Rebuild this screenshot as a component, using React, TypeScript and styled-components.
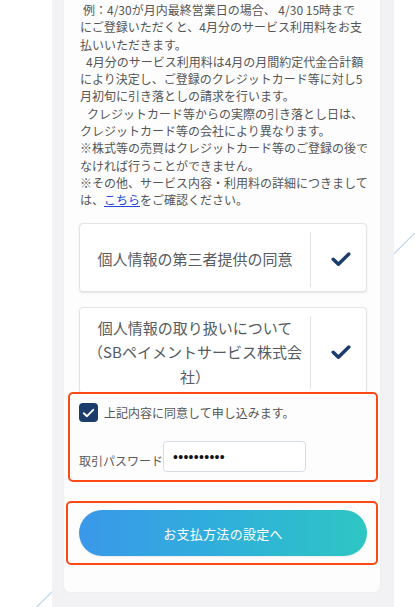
import React from "react";
import styled, { createGlobalStyle } from "styled-components";

const GlobalStyle = createGlobalStyle`
  html, body {
    margin: 0;
    padding: 0;
    background: #ffffff;
  }
  body {
    font-family: "Noto Sans CJK JP", "Noto Sans", sans-serif;
  }
  #root {
    width: 415px;
    height: 607px;
  }
`;

const Page = styled.div`
  position: relative;
  width: 415px;
  height: 607px;
  overflow: hidden;
  background: #ffffff;
`;

const Backdrop = styled.svg`
  position: absolute;
  left: 0;
  top: 0;
  width: 415px;
  height: 607px;
  pointer-events: none;
`;

const Panel = styled.div`
  position: relative;
  margin-left: 52px;
  width: 342px;
  min-height: 607px;
  box-sizing: border-box;
  background: #f2f2f4;
  padding: 0 14px 14px 12px;
`;

const Card = styled.main`
  display: flex;
  flex-direction: column;
  background: #fdfdfe;
  border-radius: 0 0 6px 6px;
  box-shadow: 0 0 3px rgba(0, 0, 0, 0.04);
  padding: 1px 13px 27px 15px;
`;

const Notice = styled.div`
  font-size: 12px;
  line-height: 17.3px;
  color: #555555;
  padding-left: 1px;
`;

const Line = styled.div<{ $indent?: number }>`
  white-space: nowrap;
  padding-left: ${(p) => p.$indent ?? 0}px;
`;

const Link = styled.a`
  color: #2449d6;
  text-decoration: underline;
`;

const ConsentList = styled.div`
  display: flex;
  flex-direction: column;
  gap: 15px;
  margin-top: 14px;
`;

const ConsentBox = styled.div`
  display: flex;
  min-height: 69px;
  box-sizing: border-box;
  border: 1px solid #e4e4e6;
  border-radius: 4px;
  background: #ffffff;
  box-shadow: 0 1px 2px rgba(0, 0, 0, 0.1);
  padding: 8px 0 4px;
`;

const ConsentText = styled.div`
  flex: 1;
  display: flex;
  align-items: center;
  justify-content: center;
  text-align: center;
  font-size: 15px;
  line-height: 24.5px;
  color: #555b63;
  padding: 0 8px;
`;

const CheckCell = styled.div`
  width: 51px;
  padding-left: 4px;
  border-left: 1px solid #e4e4e6;
  display: flex;
  align-items: center;
  justify-content: center;
`;

const Highlight = styled.section`
  position: relative;
  z-index: 1;
  border: 2px solid #fb4a16;
  border-radius: 5px;
  background: #fdfdfe;
`;

const AgreementArea = styled(Highlight)`
  margin: -2px -11px 0 -11px;
  padding: 9px 9px 8px 9px;
`;

const SubmitArea = styled(Highlight)`
  margin: 19px -11px 0 -13px;
  padding: 7px 9px 7px 11px;
`;

const AgreeRow = styled.label`
  display: flex;
  align-items: center;
  gap: 6px;
  font-size: 12px;
  line-height: 17px;
  color: #555555;
`;

const CheckBox = styled.span`
  width: 19px;
  height: 19px;
  border-radius: 4px;
  background: #1b3d6e;
  display: flex;
  align-items: center;
  justify-content: center;
  flex-shrink: 0;
`;

const PasswordRow = styled.div`
  display: flex;
  align-items: center;
  margin-top: 19px;
`;

const PasswordLabel = styled.span`
  font-size: 12px;
  line-height: 17px;
  color: #5a5a5a;
  margin-top: 7px;
  width: 84px;
  white-space: nowrap;
`;

const PasswordInput = styled.input`
  width: 143px;
  height: 31px;
  box-sizing: border-box;
  border: 1px solid #d6dde6;
  border-radius: 4px;
  background: #ffffff;
  padding: 0 9px;
  font-family: "Liberation Sans", sans-serif;
  font-size: 14px;
  letter-spacing: 0.3px;
  color: #111111;
  outline: none;
`;

const SubmitButton = styled.button`
  display: block;
  width: 100%;
  height: 46px;
  border: none;
  border-radius: 23px;
  background: linear-gradient(90deg, #3a98ea 0%, #2fb0da 50%, #2ec6c4 100%);
  box-shadow: 0 1px 2px rgba(0, 0, 0, 0.08);
  color: #ffffff;
  font-family: "Noto Sans CJK JP", "Noto Sans", sans-serif;
  font-size: 13px;
  font-weight: 400;
  letter-spacing: 0.3px;
  cursor: pointer;
`;

const BigCheck = () => (
  <svg width="20" height="15" viewBox="0 0 20 15" aria-hidden="true">
    <path
      d="M2.2 7.2 L7.4 12.3 L17.8 2"
      fill="none"
      stroke="#1b3d6e"
      strokeWidth="3.4"
      strokeLinecap="round"
      strokeLinejoin="round"
    />
  </svg>
);

const SmallCheck = () => (
  <svg width="13" height="10" viewBox="0 0 13 10" aria-hidden="true">
    <path
      d="M1.8 5.2 L5 8.2 L11.2 1.8"
      fill="none"
      stroke="#ffffff"
      strokeWidth="1.9"
      strokeLinecap="round"
      strokeLinejoin="round"
    />
  </svg>
);

export default function App() {
  return (
    <Page>
      <GlobalStyle />
      <Backdrop viewBox="0 0 415 607" aria-hidden="true">
        <line x1="36.8" y1="607" x2="415" y2="233" stroke="#bcd5f1" strokeWidth="1.2" />
      </Backdrop>
      <Panel>
        <Card>
          <Notice>
            <Line $indent={3}>例：4/30が月内最終営業日の場合、 4/30 15時まで</Line>
            <Line>にご登録いただくと、4月分のサービス利用料をお支</Line>
            <Line>払いいただきます。</Line>
            <Line $indent={6}>4月分のサービス利用料は4月の月間約定代金合計額</Line>
            <Line>により決定し、ご登録のクレジットカード等に対し5</Line>
            <Line>月初旬に引き落としの請求を行います。</Line>
            <Line $indent={7}>クレジットカード等からの実際の引き落とし日は、</Line>
            <Line>クレジットカード等の会社により異なります。</Line>
            <Line>※株式等の売買はクレジットカード等のご登録の後で</Line>
            <Line>なければ行うことができません。</Line>
            <Line>※その他、サービス内容・利用料の詳細につきまして</Line>
            <Line>
              は、<Link href="#">こちら</Link>をご確認ください。
            </Line>
          </Notice>

          <ConsentList>
            <ConsentBox>
              <ConsentText>個人情報の第三者提供の同意</ConsentText>
              <CheckCell>
                <BigCheck />
              </CheckCell>
            </ConsentBox>
            <ConsentBox>
              <ConsentText>
                個人情報の取り扱いについて
                <br />
                （SBペイメントサービス株式会
                <br />
                社）
              </ConsentText>
              <CheckCell>
                <BigCheck />
              </CheckCell>
            </ConsentBox>
          </ConsentList>

          <AgreementArea>
            <AgreeRow>
              <CheckBox>
                <SmallCheck />
              </CheckBox>
              上記内容に同意して申し込みます。
            </AgreeRow>
            <PasswordRow>
              <PasswordLabel>取引パスワード</PasswordLabel>
              <PasswordInput type="password" readOnly value="0000000000" />
            </PasswordRow>
          </AgreementArea>

          <SubmitArea>
            <SubmitButton type="button">お支払方法の設定へ</SubmitButton>
          </SubmitArea>
        </Card>
      </Panel>
    </Page>
  );
}
